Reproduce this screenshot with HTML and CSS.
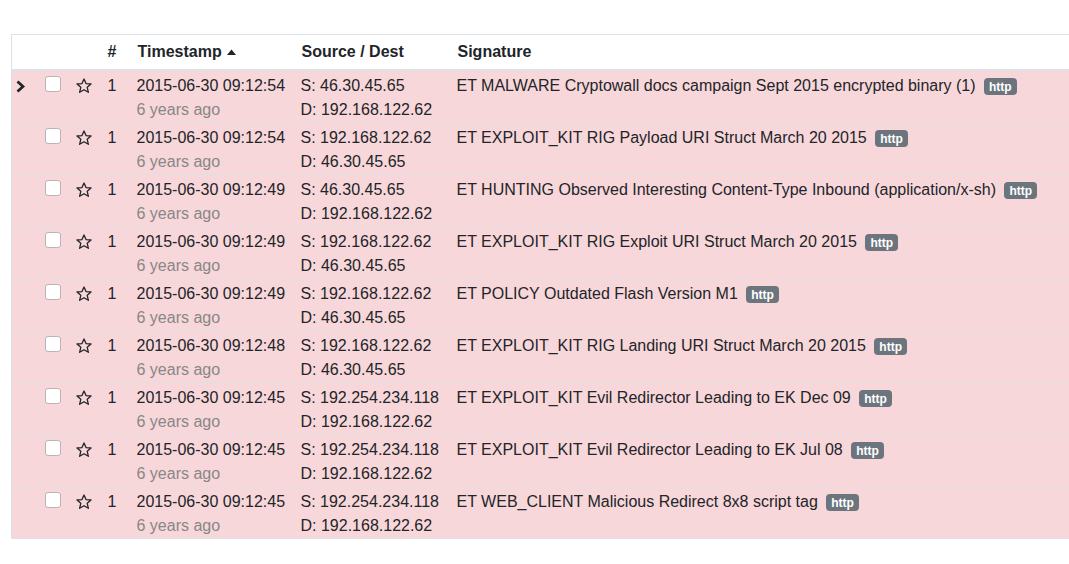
FILE: index.html
```html
<!DOCTYPE html>
<html>
<head>
<meta charset="utf-8">
<link rel="stylesheet" href="styles.css">
</head>
<body>
<table class="events">
  <colgroup>
    <col class="c-exp"><col class="c-chk"><col class="c-star"><col class="c-num"><col class="c-ts"><col class="c-src"><col class="c-sig">
  </colgroup>
  <thead>
    <tr>
      <th></th><th></th><th></th>
      <th class="num">#</th>
      <th>Timestamp <svg class="caret" width="9" height="6" viewBox="0 0 9 6"><path d="M0 6 L4.5 0.5 L9 6 Z" fill="#212529"/></svg></th>
      <th>Source / Dest</th>
      <th>Signature</th>
    </tr>
  </thead>
  <tbody id="rows">
  </tbody>
</table>
<script src="app.js"></script>
</body>
</html>
```
FILE: app.js
```js
var data = [
  ["2015-06-30 09:12:54","46.30.45.65","192.168.122.62","ET MALWARE Cryptowall docs campaign Sept 2015 encrypted binary (1)"],
  ["2015-06-30 09:12:54","192.168.122.62","46.30.45.65","ET EXPLOIT_KIT RIG Payload URI Struct March 20 2015"],
  ["2015-06-30 09:12:49","46.30.45.65","192.168.122.62","ET HUNTING Observed Interesting Content-Type Inbound (application/x-sh)"],
  ["2015-06-30 09:12:49","192.168.122.62","46.30.45.65","ET EXPLOIT_KIT RIG Exploit URI Struct March 20 2015"],
  ["2015-06-30 09:12:49","192.168.122.62","46.30.45.65","ET POLICY Outdated Flash Version M1"],
  ["2015-06-30 09:12:48","192.168.122.62","46.30.45.65","ET EXPLOIT_KIT RIG Landing URI Struct March 20 2015"],
  ["2015-06-30 09:12:45","192.254.234.118","192.168.122.62","ET EXPLOIT_KIT Evil Redirector Leading to EK Dec 09"],
  ["2015-06-30 09:12:45","192.254.234.118","192.168.122.62","ET EXPLOIT_KIT Evil Redirector Leading to EK Jul 08"],
  ["2015-06-30 09:12:45","192.254.234.118","192.168.122.62","ET WEB_CLIENT Malicious Redirect 8x8 script tag"]
];
var star = '<svg class="star" width="16" height="16" viewBox="0 0 16 16"><path d="M8 1 L10 5.6 L15 6 L11.2 9.3 L12.4 14.3 L8 11.7 L3.6 14.3 L4.8 9.3 L1 6 L6 5.6 Z" fill="none" stroke="#212529" stroke-width="1.3" stroke-linejoin="round"/></svg>';
var chev = '<svg class="chev" width="9" height="13" viewBox="0 0 9 13"><path d="M1.5 1.5 L7 6.5 L1.5 11.5" fill="none" stroke="#212529" stroke-width="2.8" stroke-linejoin="miter"/></svg>';
var html = "";
data.forEach(function (r, i) {
  html += '<tr>' +
    '<td class="exp">' + (i === 0 ? chev : '') + '</td>' +
    '<td class="chk"><span class="box"></span></td>' +
    '<td class="st">' + star + '</td>' +
    '<td class="num">1</td>' +
    '<td>' + r[0] + '<div class="muted">6 years ago</div></td>' +
    '<td>S: ' + r[1] + '<div>D: ' + r[2] + '</div></td>' +
    '<td>' + r[3] + ' <span class="badge">http</span></td>' +
    '</tr>';
});
document.getElementById("rows").innerHTML = html;
```
FILE: styles.css
```css
html, body {
  margin: 0;
  padding: 0;
  background: #fff;
  overflow: hidden;
}
body {
  padding: 34px 0 0 11px;
  font-family: "Liberation Sans", Arial, sans-serif;
  font-size: 16px;
  line-height: 24px;
  color: #212529;
}
.events {
  border-collapse: collapse;
  width: 1080px;
  table-layout: fixed;
  border: 1px solid #dee2e6;
}
.c-exp { width: 25px; }
.c-chk { width: 32px; }
.c-star { width: 32px; }
.c-num { width: 32px; }
.c-ts { width: 164px; }
.c-src { width: 156px; }
.events th {
  text-align: left;
  font-weight: 700;
  padding: 5px 5px 5px;
  border-bottom: 2px solid #dee2e6;
  white-space: nowrap;
}
.events th.num { padding-left: 7px; }
.caret { vertical-align: 2px; margin-left: 1px; }
.events td {
  background: #f8d7da;
  padding: 3px 4px 0;
  vertical-align: top;
  border-top: 1px solid #e3dde0;
  white-space: nowrap;
}
.events td.exp { padding-left: 4px; }
.chev { display: block; margin-top: 6px; }
.events td.chk { text-align: center; }
.box {
  display: inline-block;
  width: 14px;
  height: 14px;
  margin-top: 2px;
  background: #fff;
  border: 1px solid #b9b4b6;
  border-radius: 3px;
  vertical-align: top;
}
.events td.st { padding-left: 7px; }
.star { display: block; margin-top: 4px; }
.events td.num { padding-left: 7px; }
.muted { color: #878787; }
.badge {
  display: inline-block;
  margin-left: 4px;
  padding: 3px 5px 2px;
  font-size: 12px;
  line-height: 12px;
  font-weight: 700;
  color: #fff;
  background: #6c757d;
  border-radius: 4px;
  vertical-align: 0px;
}
```
